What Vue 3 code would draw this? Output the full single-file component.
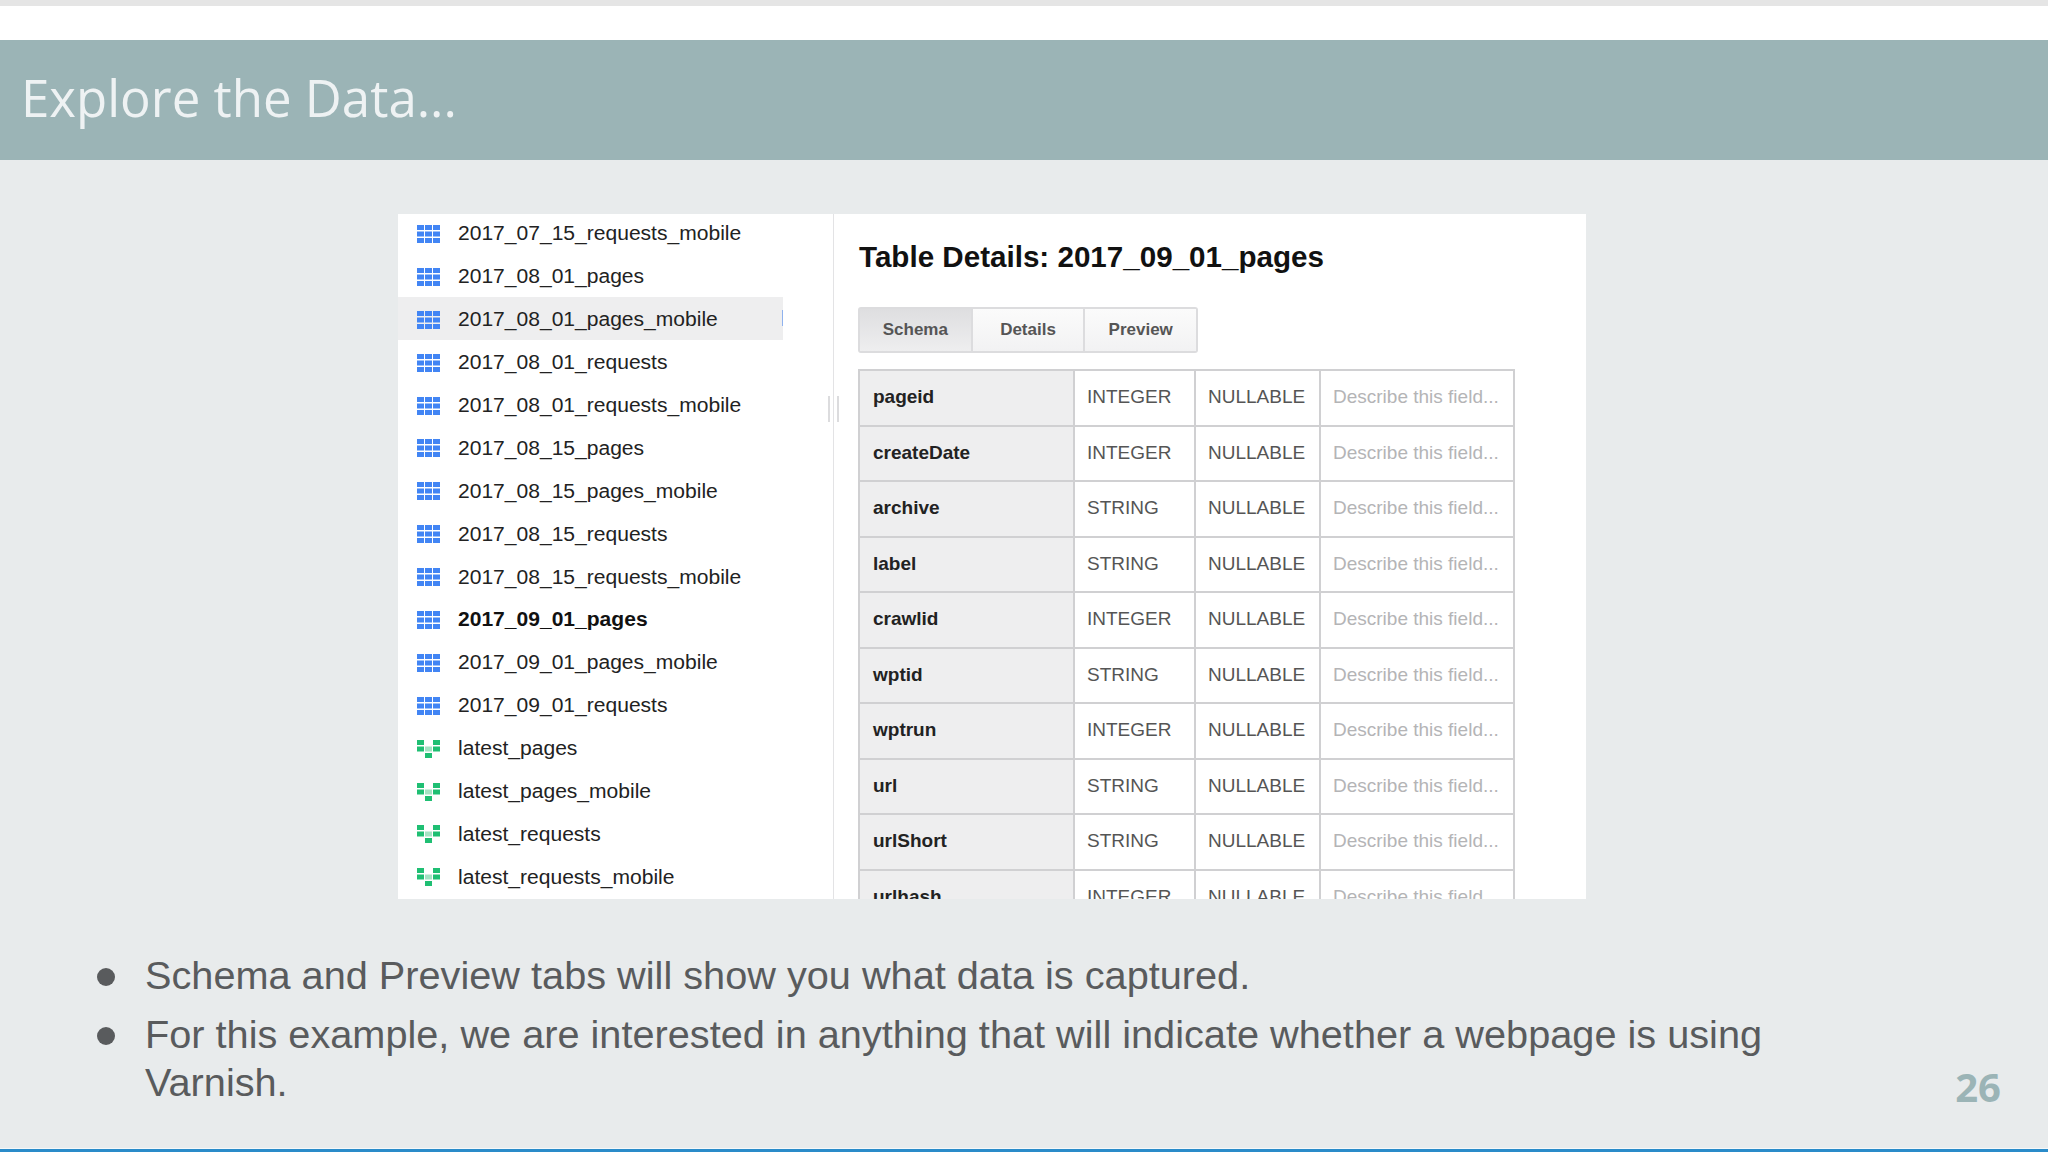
<script setup>
const tables = [
  { name: '2017_07_15_requests_mobile', type: 'table' },
  { name: '2017_08_01_pages', type: 'table' },
  { name: '2017_08_01_pages_mobile', type: 'table', hover: true },
  { name: '2017_08_01_requests', type: 'table' },
  { name: '2017_08_01_requests_mobile', type: 'table' },
  { name: '2017_08_15_pages', type: 'table' },
  { name: '2017_08_15_pages_mobile', type: 'table' },
  { name: '2017_08_15_requests', type: 'table' },
  { name: '2017_08_15_requests_mobile', type: 'table' },
  { name: '2017_09_01_pages', type: 'table', active: true },
  { name: '2017_09_01_pages_mobile', type: 'table' },
  { name: '2017_09_01_requests', type: 'table' },
  { name: 'latest_pages', type: 'view' },
  { name: 'latest_pages_mobile', type: 'view' },
  { name: 'latest_requests', type: 'view' },
  { name: 'latest_requests_mobile', type: 'view' }
]

const fields = [
  ['pageid', 'INTEGER'],
  ['createDate', 'INTEGER'],
  ['archive', 'STRING'],
  ['label', 'STRING'],
  ['crawlid', 'INTEGER'],
  ['wptid', 'STRING'],
  ['wptrun', 'INTEGER'],
  ['url', 'STRING'],
  ['urlShort', 'STRING'],
  ['urlhash', 'INTEGER']
]

const tabs = ['Schema', 'Details', 'Preview']

// 3x3 cells for the blue table icon
const gridCells = []
for (let r = 0; r < 3; r++) {
  for (let c = 0; c < 3; c++) {
    gridCells.push({ x: c * 8, y: r * 6.5 })
  }
}
</script>

<template>
  <div class="slide">
    <div class="top-strip"></div>
    <header class="title-bar">
      <h1>Explore the Data...</h1>
    </header>

    <main class="body">
      <section class="shot">
        <aside class="dataset">
          <ul class="table-list">
            <li
              v-for="t in tables"
              :key="t.name"
              class="table-row"
              :class="{ hover: t.hover, active: t.active }"
            >
              <svg v-if="t.type === 'table'" class="tbl-icon" viewBox="0 0 23 18">
                <rect
                  v-for="(cell, i) in gridCells"
                  :key="i"
                  :x="cell.x"
                  :y="cell.y"
                  width="7"
                  height="5"
                  fill="#4285f4"
                />
              </svg>
              <svg v-else class="tbl-icon" viewBox="0 0 23 18">
                <rect x="0" y="0" width="7" height="5" fill="#1fbf73" />
                <rect x="16" y="0" width="7" height="5" fill="#1fbf73" />
                <rect x="0" y="6.5" width="7" height="5" fill="#1fbf73" />
                <rect x="16" y="6.5" width="7" height="5" fill="#1fbf73" />
                <rect x="8" y="6.5" width="7" height="5" fill="#a5e3c4" />
                <rect x="8" y="13" width="7" height="5" fill="#1fbf73" />
              </svg>
              <span>{{ t.name }}</span>
              <i v-if="t.hover" class="tick"></i>
            </li>
          </ul>
          <div class="grip"></div>
        </aside>

        <div class="details">
          <h2>Table Details: 2017_09_01_pages</h2>
          <div class="tabs">
            <button
              v-for="(tab, i) in tabs"
              :key="tab"
              class="tab"
              :class="{ selected: i === 0 }"
            >
              {{ tab }}
            </button>
          </div>
          <table class="schema">
            <tbody>
              <tr v-for="f in fields" :key="f[0]">
                <th>{{ f[0] }}</th>
                <td>{{ f[1] }}</td>
                <td>NULLABLE</td>
                <td class="desc">Describe this field...</td>
              </tr>
            </tbody>
          </table>
        </div>
      </section>

      <ul class="notes">
        <li>Schema and Preview tabs will show you what data is captured.</li>
        <li>For this example, we are interested in anything that will indicate whether a webpage is using Varnish.</li>
      </ul>

      <div class="page-num">26</div>
    </main>
  </div>
</template>

<style>
html, body {
  margin: 0;
  background: #e8ebec;
}
</style>

<style scoped>
.slide {
  width: 2048px;
  height: 1152px;
  display: flex;
  flex-direction: column;
  background: #fff;
  overflow: hidden;
  font-family: "Liberation Sans", Arial, sans-serif;
}

.top-strip {
  height: 6px;
  margin-bottom: 34px;
  background: #e5e5e5;
}

.title-bar {
  height: 120px;
  flex: none;
  display: flex;
  align-items: center;
  padding: 0 0 7px 21px;
  box-sizing: border-box;
  background: #9bb4b6;
}

.title-bar h1 {
  margin: 0;
  font-family: "Open Sans", sans-serif;
  font-weight: 400;
  font-size: 51px;
  color: #eef2f3;
}

.body {
  position: relative;
  flex: 1;
  min-height: 0;
  padding-top: 54px;
  background: #e8ebec;
  border-bottom: 3px solid #2a8bc9;
  box-shadow: inset 0 -1px 0 #f4f8fa;
}

.shot {
  display: flex;
  width: 1188px;
  height: 685px;
  margin-left: 398px;
  background: #fff;
  overflow: hidden;
}

.dataset {
  position: relative;
  width: 436px;
  flex: none;
  box-sizing: border-box;
  border-right: 1px solid #e3e3e5;
}

.table-list {
  list-style: none;
  margin: -3px 0 0;
  padding: 0;
}

.table-row {
  position: relative;
  display: flex;
  align-items: center;
  gap: 18px;
  width: 385px;
  height: 42.9px;
  padding: 2px 0 0 19px;
  box-sizing: border-box;
  font-size: 21.05px;
  color: #222;
}

.table-row.hover {
  background: #eeeeef;
}

.table-row.active {
  font-weight: 700;
  color: #111;
}

.tbl-icon {
  width: 23px;
  height: 18px;
  margin-top: 1px;
  flex: none;
}

.tick {
  position: absolute;
  right: 0;
  top: 13px;
  width: 1px;
  height: 16px;
  background: #8fb2ee;
}

.grip {
  position: absolute;
  left: 430px;
  top: 182px;
  width: 11px;
  height: 26px;
  box-sizing: border-box;
  border-left: 2px solid #dcdcde;
  border-right: 2px solid #dcdcde;
}

.details {
  flex: 1;
  padding: 0 0 0 24px;
}

.details h2 {
  margin: 25px 0 0 1px;
  font-size: 29.6px;
  line-height: 36px;
  font-weight: 700;
  color: #111;
}

.tabs {
  display: flex;
  width: 340px;
  height: 46px;
  margin-top: 32px;
  box-sizing: border-box;
  border: 2px solid #dcdcde;
  border-radius: 3px;
}

.tab {
  flex: 1;
  padding: 0;
  border: 0;
  border-left: 2px solid #dcdcde;
  background: linear-gradient(#fbfbfb, #f2f2f3);
  font-family: inherit;
  font-size: 17px;
  font-weight: 700;
  color: #555;
}

.tab:first-child {
  border-left: 0;
}

.tab.selected {
  background: linear-gradient(#dedee0, #eeeeef);
}

.schema {
  width: 655px;
  margin-top: 16px;
  border-collapse: collapse;
  table-layout: fixed;
  font-size: 19px;
}

.schema th,
.schema td {
  height: 55.5px;
  padding: 0 0 1px 12px;
  box-sizing: border-box;
  border: 2px solid #d0d0d2;
  text-align: left;
  white-space: nowrap;
}

.schema th {
  width: 215px;
  padding-left: 13px;
  background: #eeeeef;
  color: #222;
  font-weight: 700;
}

.schema td {
  width: 121px;
  color: #555;
}

.schema td:nth-child(3) {
  width: 125px;
}

.schema td.desc {
  width: 194px;
  color: #b4b4b6;
}

.notes {
  list-style: none;
  margin: 52px 0 0;
  padding: 0 0 0 145px;
  width: 1640px;
  font-size: 39.7px;
  line-height: 48px;
  color: #595b5d;
}

.notes li {
  position: relative;
  margin-bottom: 11px;
}

.notes li::before {
  content: "";
  position: absolute;
  left: -48px;
  top: 17px;
  width: 18px;
  height: 18px;
  border-radius: 50%;
  background: #595b5d;
}

.page-num {
  position: absolute;
  right: 47px;
  bottom: 38px;
  font-family: "Open Sans", sans-serif;
  font-size: 40px;
  line-height: 48px;
  font-weight: 700;
  color: #9bb4b6;
}
</style>
